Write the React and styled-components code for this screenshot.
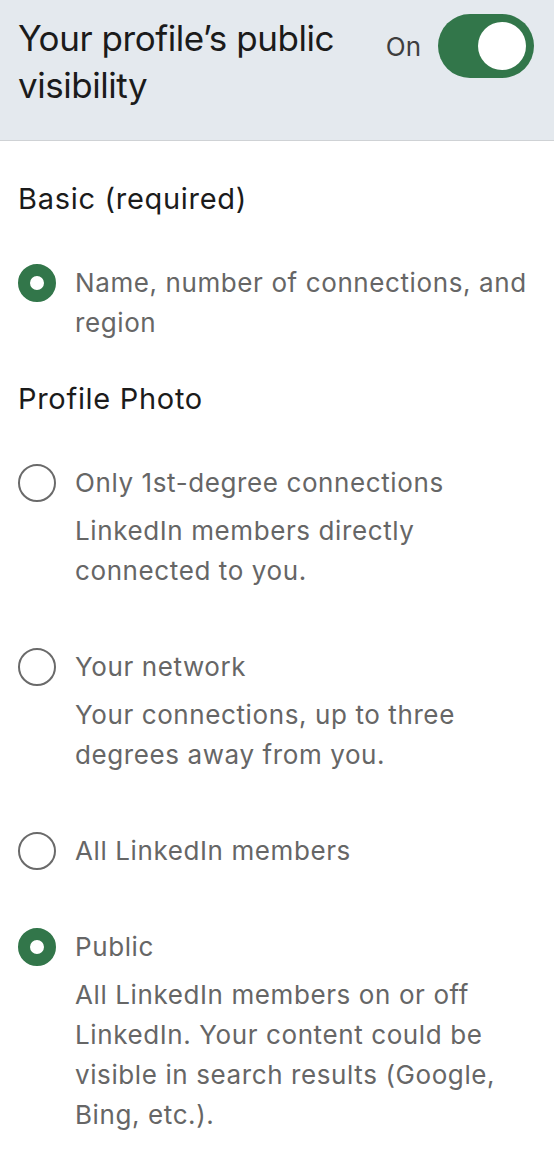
import styled, { createGlobalStyle } from "styled-components";

const GlobalStyle = createGlobalStyle`
  html, body {
    margin: 0;
    padding: 0;
    background: #ffffff;
  }
  body {
    font-family: Inter, "Liberation Sans", Arial, sans-serif;
    -webkit-font-smoothing: antialiased;
  }
`;

const Page = styled.div`
  width: 554px;
  min-height: 1152px;
  background: #ffffff;
`;

const Header = styled.header`
  display: flex;
  align-items: flex-start;
  gap: 20px;
  padding: 15px 20px 31px 18px;
  background: #e4e9ee;
  border-bottom: 1px solid #cfd2d5;
`;

const Title = styled.h1`
  flex: 1;
  margin: 0;
  font-size: 35px;
  line-height: 47px;
  letter-spacing: -0.45px;
  font-weight: 400;
  color: #1b1b1b;
`;

const ToggleWrap = styled.div`
  display: flex;
  align-items: center;
  gap: 17px;
  margin-top: -1px;
`;

const ToggleText = styled.span`
  font-size: 26px;
  color: #3e3e3e;
`;

const Switch = styled.div`
  display: flex;
  align-items: center;
  justify-content: ${(p) => (p.$on ? "flex-end" : "flex-start")};
  width: 96px;
  height: 64px;
  padding: 0 8px;
  box-sizing: border-box;
  border-radius: 32px;
  background: ${(p) => (p.$on ? "#32764a" : "#8c8c8c")};
`;

const Knob = styled.span`
  width: 48px;
  height: 48px;
  border-radius: 50%;
  background: #ffffff;
`;

const Body = styled.main`
  display: flex;
  flex-direction: column;
  padding: 38px 20px 40px 18px;
`;

const Section = styled.section`
  display: flex;
  flex-direction: column;
  gap: 56px;
  & + & {
    margin-top: 36px;
  }
`;

const SectionTitle = styled.h2`
  margin: 0 0 -12px;
  font-size: 29px;
  line-height: 40px;
  letter-spacing: 0.7px;
  font-weight: 400;
  color: #1b1b1b;
`;

const Option = styled.label`
  display: flex;
  align-items: flex-start;
  gap: 19px;
`;

const Radio = styled.span`
  flex: none;
  width: 38px;
  height: 38px;
  margin-top: 1px;
  box-sizing: border-box;
  border-radius: 50%;
  border: ${(p) => (p.$checked ? "12px solid #32764a" : "2px solid #6a6a6a")};
  background: #ffffff;
`;

const OptionText = styled.div`
  display: flex;
  flex-direction: column;
  gap: 8px;
`;

const OptionLabel = styled.span`
  font-size: 26px;
  line-height: 40px;
  letter-spacing: 0.6px;
  color: #666666;
`;

const OptionHint = styled.span`
  font-size: 26px;
  line-height: 40px;
  letter-spacing: 0.6px;
  color: #666666;
`;

const photoOptions = [
  {
    label: "Only 1st-degree connections",
    hint: "LinkedIn members directly connected to you.",
  },
  {
    label: "Your network",
    hint: "Your connections, up to three degrees away from you.",
  },
  { label: "All LinkedIn members" },
  {
    label: "Public",
    hint: "All LinkedIn members on or off LinkedIn. Your content could be visible in search results (Google, Bing, etc.).",
    checked: true,
  },
];

export default function App() {
  return (
    <Page>
      <GlobalStyle />
      <Header>
        <Title>Your profile’s public visibility</Title>
        <ToggleWrap>
          <ToggleText>On</ToggleText>
          <Switch $on>
            <Knob />
          </Switch>
        </ToggleWrap>
      </Header>
      <Body>
        <Section>
          <SectionTitle>Basic (required)</SectionTitle>
          <Option>
            <Radio $checked />
            <OptionText>
              <OptionLabel>Name, number of connections, and region</OptionLabel>
            </OptionText>
          </Option>
        </Section>
        <Section>
          <SectionTitle>Profile Photo</SectionTitle>
          {photoOptions.map((opt) => (
            <Option key={opt.label}>
              <Radio $checked={opt.checked} />
              <OptionText>
                <OptionLabel>{opt.label}</OptionLabel>
                {opt.hint && <OptionHint>{opt.hint}</OptionHint>}
              </OptionText>
            </Option>
          ))}
        </Section>
      </Body>
    </Page>
  );
}
